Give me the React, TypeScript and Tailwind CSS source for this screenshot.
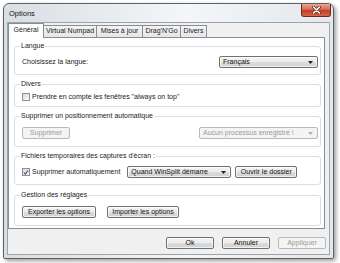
import type { JSX, ReactNode } from 'react';

const btn =
  'flex items-center justify-center rounded-[2px] border border-[#707070] bg-[linear-gradient(#f4f4f4_0%,#ebebeb_50%,#dddddd_50%,#cfcfcf_100%)] text-[#111] shadow-[inset_0_0_0_1px_rgba(255,255,255,0.7)]';
const btnDisabled =
  'flex items-center justify-center rounded-[2px] border border-[#b5b9bc] bg-[#f4f4f4] text-[#9a9a9a]';

function Arrow({ disabled = false }: { disabled?: boolean }): JSX.Element {
  return (
    <svg width="5" height="3" viewBox="0 0 5 3" className="ml-auto shrink-0">
      <path d="M0 0 H5 L2.5 3 Z" fill={disabled ? '#b0b0b0' : '#222'} />
    </svg>
  );
}

function Select({
  label,
  width,
  disabled = false,
}: {
  label: string;
  width: string;
  disabled?: boolean;
}): JSX.Element {
  return (
    <div
      className={`${disabled ? btnDisabled : btn} ${width} h-[12px] justify-start pl-[3px] pr-[4px]`}
    >
      <span className="whitespace-nowrap">{label}</span>
      <Arrow disabled={disabled} />
    </div>
  );
}

function Checkbox({ checked = false }: { checked?: boolean }): JSX.Element {
  return (
    <span className="flex h-[8px] w-[8px] shrink-0 items-center justify-center border border-[#8e8f8f] bg-[linear-gradient(135deg,#dcdcdc,#fafafa)]">
      {checked ? (
        <svg width="7" height="7" viewBox="0 0 7 7">
          <path d="M1 3.6 L2.8 5.4 L6 1" stroke="#3a5a9c" strokeWidth="1.4" fill="none" />
        </svg>
      ) : null}
    </span>
  );
}

function Group({
  title,
  inner,
  className,
  children,
}: {
  title: string;
  inner: string;
  className: string;
  children: ReactNode;
}): JSX.Element {
  return (
    <fieldset className={`rounded-[3px] border border-[#d5dfe5] ${className}`}>
      <legend className="ml-[5px] px-[1px] text-[7px] leading-[8px]">{title}</legend>
      <div className={`flex items-center pl-[7px] pr-[2px] ${inner}`}>{children}</div>
    </fieldset>
  );
}

const tabs = [
  { label: 'Général', w: 'w-[36px]' },
  { label: 'Virtual Numpad', w: 'w-[54px]' },
  { label: 'Mises à jour', w: 'w-[47px]' },
  { label: "Drag'N'Go", w: 'w-[39px]' },
  { label: 'Divers', w: 'w-[27px]' },
];

export default function App(): JSX.Element {
  return (
    <div className="h-[263px] w-[340px] overflow-hidden bg-white pt-[3px] pl-[3px] font-['Liberation_Sans',Arial,sans-serif] text-[7px] text-[#1a1a1a]">
      <div className="flex h-[256px] w-[331px] flex-col rounded-t-[6px] rounded-b-[2px] border border-[#5b6066] bg-[linear-gradient(to_right,#d9dee3,#f4f6f8_55%,#e4e8ec)] shadow-[2px_2px_4px_rgba(0,0,0,0.4)]">
        <div className="flex h-[18px] items-start">
          <span className="pl-[5px] pt-[5px] text-[7.5px] leading-[9px] text-[#111]">Options</span>
          <div className="ml-auto mr-[2px] flex h-[13px] w-[30px] items-center justify-center rounded-b-[3px] border border-t-0 border-[#6e2b22] bg-[linear-gradient(#eaa996_0%,#d66a55_45%,#c43c26_55%,#d9654a_100%)]">
            <svg width="9" height="8" viewBox="0 0 9 8">
              <path d="M1.5 1 L7.5 7 M7.5 1 L1.5 7" stroke="#5a2a22" strokeWidth="3" strokeLinecap="round" />
              <path d="M1.5 1 L7.5 7 M7.5 1 L1.5 7" stroke="#ffffff" strokeWidth="1.6" strokeLinecap="round" />
            </svg>
          </div>
        </div>

        <div className="mx-[3px] flex flex-1 flex-col border border-[#9aa4ae] bg-[#f0f0f0]">
          <div className="flex h-[14px] items-end">
            {tabs.map((t, i) =>
              i === 0 ? (
                <div
                  key={t.label}
                  className={`relative z-10 -mb-[1px] flex h-[15px] ${t.w} items-center justify-center border border-b-0 border-[#898c95] bg-white pb-[1px]`}
                >
                  {t.label}
                </div>
              ) : (
                <div
                  key={t.label}
                  className={`-ml-[1px] flex h-[12px] ${t.w} items-center justify-center border border-b-0 border-[#898c95] bg-[linear-gradient(#f4f4f4,#e6e6e6)] whitespace-nowrap`}
                >
                  {t.label}
                </div>
              ),
            )}
          </div>

          <div className="mr-[4px] flex h-[192px] flex-col border border-[#898c95] bg-white pl-[5px] pr-[3px] pt-[4px]">
            <Group title="Langue" inner="h-[24px] justify-between pl-[6px]" className="">
              <span>Choisissez la langue:</span>
              <Select label="Français" width="w-[99px]" />
            </Group>

            <Group title="Divers" inner="h-[18px] gap-[2px]" className="mt-[5px]">
              <Checkbox />
              <span>Prendre en compte les fenêtres "always on top"</span>
            </Group>

            <Group
              title="Supprimer un positionnement automatique"
              inner="h-[26px] justify-between"
              className="mt-[5px]"
            >
              <div className={`${btnDisabled} h-[12px] w-[48px]`}>Supprimer</div>
              <Select label="Aucun processus enregistré !" width="w-[119px]" disabled />
            </Group>

            <Group
              title="Fichiers temporaires des captures d'écran :"
              inner="h-[24px]"
              className="mt-[5px]"
            >
              <Checkbox checked />
              <span className="ml-[2px]">Supprimer automatiquement</span>
              <div className="ml-[7px]">
                <Select label="Quand WinSplit démarre" width="w-[104px]" />
              </div>
              <div className={`${btn} ml-[4px] h-[12px] w-[62px]`}>Ouvrir le dossier</div>
            </Group>

            <Group title="Gestion des réglages" inner="h-[26px] gap-[11px]" className="mt-[6px]">
              <div className={`${btn} h-[12px] w-[74px]`}>Exporter les options</div>
              <div className={`${btn} h-[12px] w-[72px]`}>Importer les options</div>
            </Group>
          </div>

          <div className="mr-[3px] mt-[8px] flex justify-end gap-[8px]">
            <div className={`${btn} h-[12px] w-[48px]`}>Ok</div>
            <div className={`${btn} h-[12px] w-[48px]`}>Annuler</div>
            <div className={`${btnDisabled} h-[12px] w-[48px]`}>Appliquer</div>
          </div>
        </div>
        <div className="h-[3px]" />
      </div>
    </div>
  );
}
